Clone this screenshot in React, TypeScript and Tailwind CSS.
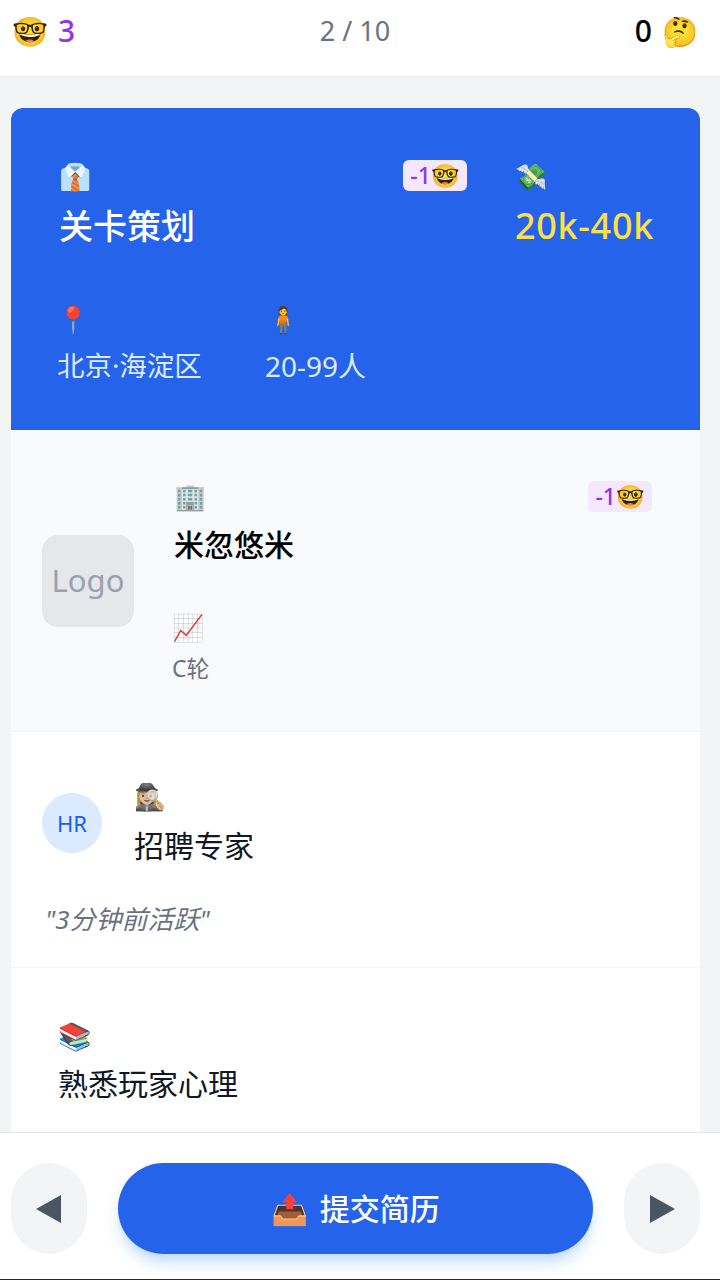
import React from "react";

const font = { fontFamily: '"Noto Sans", "Noto Sans CJK SC", "Noto Color Emoji", sans-serif' };

function CostBadge({ className }: { className: string }) {
  return (
    <div className={`flex h-[31px] w-[64px] items-center justify-center rounded-md text-[23px] leading-none font-medium text-[#9333ea] ${className}`}>
      <span>-1</span>
      <span className="text-[23px]">🤓</span>
    </div>
  );
}

export default function App() {
  return (
    <div style={font} className="flex h-[1280px] w-[720px] flex-col overflow-hidden bg-gray-100">
      {/* top score bar */}
      <header className="flex h-[77px] shrink-0 items-start justify-between border-b border-gray-200 bg-white pt-[11px] pr-[22px] pl-3">
        <div className="flex items-center gap-[10px] text-[30px] leading-[40px] font-medium text-[#9333ea]">
          <span className="text-[29px]">🤓</span>
          <span>3</span>
        </div>
        <div className="text-[27px] leading-[40px] text-gray-500">2 / 10</div>
        <div className="flex items-center gap-[10px] text-[30px] leading-[40px] font-medium text-black">
          <span>0</span>
          <span className="text-[29px]">🤔</span>
        </div>
      </header>

      <main className="min-h-0 flex-1 overflow-hidden pt-[31px] pr-[20px] pl-[11px]">
        <div className="h-full overflow-hidden rounded-t-xl bg-white">
          {/* job */}
          <section className="h-[322px] bg-[#2563eb] pt-[50px] pr-[46px] pl-12">
            <div className="flex items-start justify-between">
              <div className="flex-1">
                <div className="text-[26px] leading-[36px]">👔</div>
                <h1 className="mt-[10px] text-[34px] leading-[44px] font-medium text-white">关卡策划</h1>
              </div>
              <CostBadge className="mt-[2px] mr-[48px] bg-[#f3e8ff]" />
              <div>
                <div className="text-[26px] leading-[36px]">💸</div>
                <div className="mt-[10px] text-[36px] leading-[44px] font-medium tracking-[0.7px] text-[#fde047]">20k-40k</div>
              </div>
            </div>
            <div className="mt-[53px] flex gap-[65px]">
              <div>
                <div className="-ml-[2px] text-[26px] leading-[36px]">📍</div>
                <div className="mt-[11px] -ml-[2px] text-[27.5px] leading-[36px] text-blue-100">北京·海淀区</div>
              </div>
              <div>
                <div className="text-[26px] leading-[36px]">🧍</div>
                <div className="mt-[11px] -ml-[2px] text-[28px] leading-[36px] text-blue-100">20-99人</div>
              </div>
            </div>
          </section>

          {/* company */}
          <section className="flex h-[302px] items-center gap-[40px] border-b border-gray-100 bg-gray-50 pr-12 pl-[31px]">
            <div className="flex h-[92px] w-[92px] shrink-0 items-center justify-center rounded-2xl bg-gray-200 text-[31px] text-gray-400">Logo</div>
            <div className="flex-1">
              <div className="flex items-start justify-between">
                <div>
                  <div className="text-[26px] leading-[36px]">🏢</div>
                  <div className="mt-[9px] text-[30px] leading-[44px] font-medium text-black">米忽悠米</div>
                </div>
                <CostBadge className="mt-[3px] bg-[#f3e8ff]" />
              </div>
              <div className="mt-[42px] -ml-[2px] text-[26px] leading-[36px]">📈</div>
              <div className="mt-[7px] -ml-[2px] text-[23px] leading-[32px] text-gray-500">C轮</div>
            </div>
          </section>

          {/* recruiter */}
          <section className="h-[236px] border-b border-gray-100 px-[31px] pt-[46px]">
            <div className="flex items-center gap-[32px]">
              <div className="flex h-[60px] w-[60px] shrink-0 items-center justify-center rounded-full bg-blue-100 text-[22px] text-blue-600">HR</div>
              <div>
                <div className="text-[26px] leading-[36px]">🕵🏼‍♀️</div>
                <div className="mt-[10px] text-[30px] leading-[44px] text-gray-900">招聘专家</div>
              </div>
            </div>
            <p className="mt-[33px] pl-[3px] text-[26px] leading-[36px] text-gray-500 italic">"3分钟前活跃"</p>
          </section>

          {/* skill */}
          <section className="pt-[50px] pr-12 pl-[47px]">
            <div className="text-[27px] leading-[36px]">📚</div>
            <div className="mt-[8px] text-[30px] leading-[44px] text-gray-900">熟悉玩家心理</div>
          </section>
        </div>
      </main>

      {/* actions */}
      <footer className="flex h-[147px] shrink-0 items-start justify-between border-t border-gray-200 bg-white pt-[30px] pr-[20px] pl-[11px]">
        <button className="flex h-[91px] w-[76px] items-center justify-center rounded-full bg-gray-100">
          <svg width="26" height="28" viewBox="0 0 26 28"><path d="M25 0v28L0 14z" fill="#4b5563" /></svg>
        </button>
        <button className="flex h-[91px] w-[475px] items-center justify-center gap-[11px] rounded-full bg-[#2563eb] text-[30px] font-medium text-white shadow-lg shadow-blue-200">
          <span>📤</span>
          <span>提交简历</span>
        </button>
        <button className="flex h-[91px] w-[76px] items-center justify-center rounded-full bg-gray-100">
          <svg width="26" height="28" viewBox="0 0 26 28"><path d="M1 0v28l25-14z" fill="#4b5563" /></svg>
        </button>
      </footer>
      <div className="h-px shrink-0 bg-gray-800" />
    </div>
  );
}
